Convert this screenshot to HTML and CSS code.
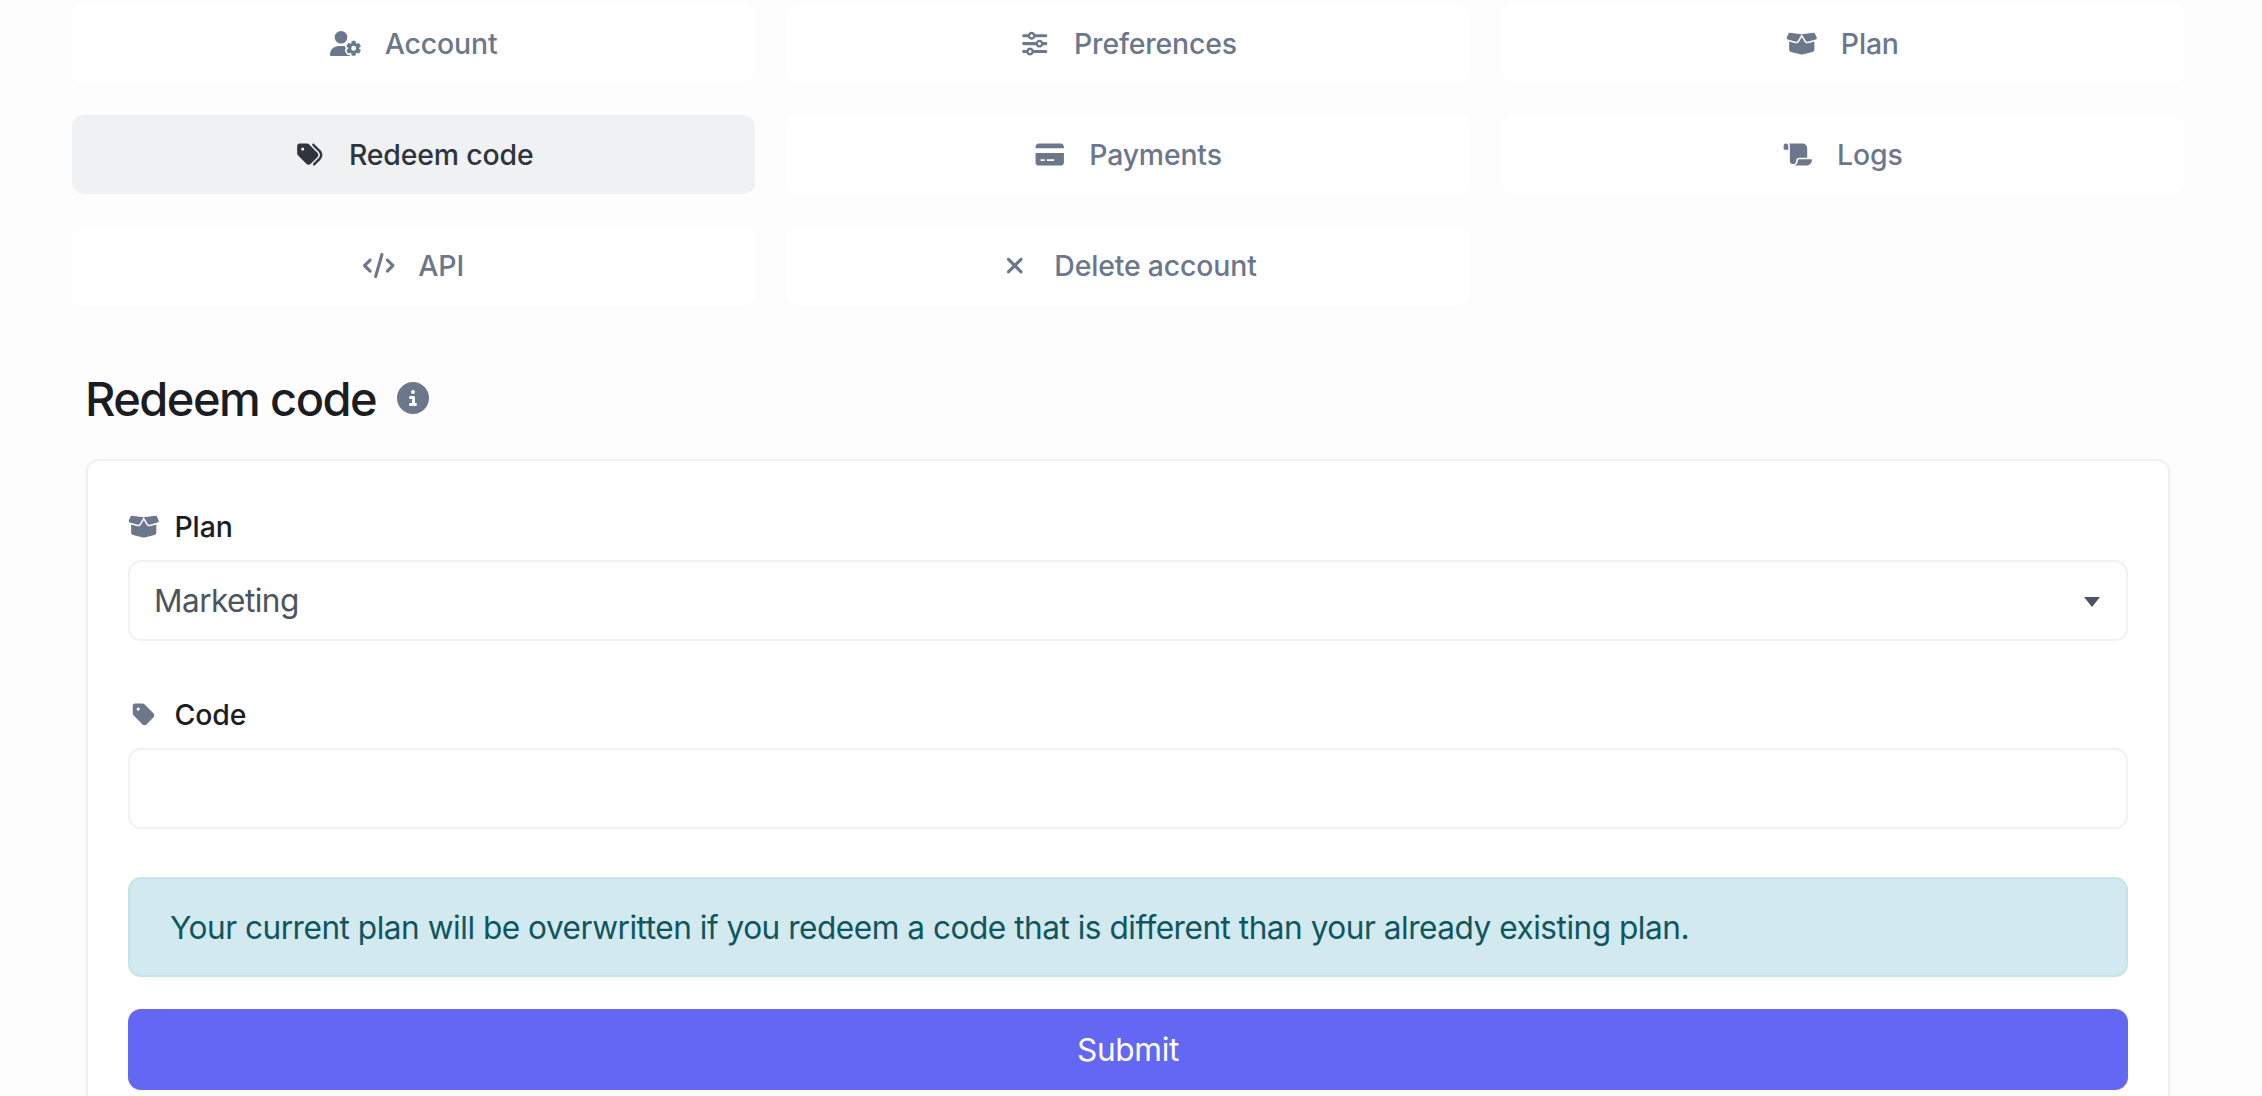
FILE: index.html
```
<!DOCTYPE html>
<html lang="en">
<head>
<meta charset="utf-8">
<title>Redeem code</title>
<link rel="stylesheet" href="styles.css">
</head>
<body>
<svg class="sprite" aria-hidden="true">
  <symbol id="box-open" viewBox="0 0 640 512"><path d="M58.9 42.1c3-6.1 9.6-9.6 16.3-8.7L320 64 564.8 33.4c6.7-.8 13.3 2.7 16.3 8.7l41.7 83.4c9 17.9-.6 39.6-19.8 45.1L439.6 217.3c-13.9 4-28.8-1.9-36.2-14.3L320 64 236.6 203c-7.4 12.4-22.3 18.3-36.2 14.3L37.1 170.6c-19.3-5.5-28.8-27.2-19.8-45.1L58.9 42.1zM321.1 128l54.9 91.4c14.9 24.8 44.6 36.6 72.5 28.6L576 211.6l0 167c0 22-15 41.2-36.4 46.6l-204.1 51c-10.2 2.6-20.9 2.6-31 0l-204.1-51C79 419.7 64 400.5 64 378.5l0-167L191.6 248c27.8 8 57.6-3.8 72.5-28.6L318.9 128l2.2 0z"/></symbol>
</svg>
<nav class="tabs">
  <a class="tab"><svg class="icon" viewBox="0 0 640 512"><path d="M224 0a128 128 0 1 1 0 256A128 128 0 1 1 224 0zM178.3 304l91.4 0c11.8 0 23.4 1.2 34.5 3.3c-2.1 18.5 7.4 35.6 21.8 44.8c-16.6 10.6-26.7 31.6-20 53.3c4 12.9 9.4 25.5 16.4 37.6s15.2 23.1 24.4 33c15.7 16.9 39.6 18.4 57.2 8.7l0 .9c0 9.2 2.7 18.5 7.9 26.3L29.7 512C13.3 512 0 498.7 0 482.3C0 383.8 79.8 304 178.3 304zM436 218.2c0-7 4.5-13.3 11.3-14.8c10.5-2.4 21.5-3.7 32.7-3.7s22.2 1.3 32.7 3.7c6.8 1.5 11.3 7.8 11.3 14.8l0 30.6c7.9 3.4 15.4 7.7 22.3 12.8l24.9-14.3c6.1-3.5 13.7-2.7 18.5 2.4c7.6 8.1 14.3 17.2 20.1 27.2s10.3 20.4 13.5 31c2.1 6.7-1.1 13.7-7.2 17.2l-25 14.4c.4 4 .7 8.1 .7 12.3s-.2 8.2-.7 12.3l25 14.4c6.1 3.5 9.2 10.5 7.2 17.2c-3.3 10.6-7.8 21-13.5 31s-12.5 19.1-20.1 27.2c-4.8 5.1-12.5 5.9-18.5 2.4l-24.9-14.3c-6.9 5.1-14.3 9.4-22.3 12.8l0 30.6c0 7-4.5 13.3-11.3 14.8c-10.5 2.4-21.5 3.7-32.7 3.7s-22.2-1.3-32.7-3.7c-6.8-1.5-11.3-7.8-11.3-14.8l0-30.5c-8-3.4-15.6-7.7-22.5-12.9l-24.7 14.3c-6.1 3.5-13.7 2.7-18.5-2.4c-7.6-8.1-14.3-17.2-20.1-27.2s-10.3-20.4-13.5-31c-2.1-6.7 1.1-13.7 7.2-17.2l24.8-14.3c-.4-4.1-.7-8.2-.7-12.4s.2-8.3 .7-12.4L343.8 325c-6.1-3.5-9.2-10.5-7.2-17.2c3.3-10.6 7.7-21 13.5-31s12.5-19.1 20.1-27.2c4.8-5.1 12.4-5.9 18.5-2.4l24.8 14.3c6.9-5.1 14.5-9.4 22.5-12.9l0-30.5zm92.1 133.5a48.1 48.1 0 1 0 -96.1 0 48.1 48.1 0 1 0 96.1 0z"/></svg><span>Account</span></a>
  <a class="tab"><svg class="icon" viewBox="0 0 512 512"><path d="M0 416c0 17.7 14.3 32 32 32l54.7 0c12.3 28.3 40.5 48 73.3 48s61-19.7 73.3-48L480 448c17.7 0 32-14.3 32-32s-14.3-32-32-32l-246.7 0c-12.3-28.3-40.5-48-73.3-48s-61 19.7-73.3 48L32 384c-17.7 0-32 14.3-32 32zm128 0a32 32 0 1 1 64 0 32 32 0 1 1 -64 0zM320 256a32 32 0 1 1 64 0 32 32 0 1 1 -64 0zm32-80c-32.8 0-61 19.7-73.3 48L32 224c-17.7 0-32 14.3-32 32s14.3 32 32 32l246.7 0c12.3 28.3 40.5 48 73.3 48s61-19.7 73.3-48l54.7 0c17.7 0 32-14.3 32-32s-14.3-32-32-32l-54.7 0c-12.3-28.3-40.5-48-73.3-48zM192 128a32 32 0 1 1 0-64 32 32 0 1 1 0 64zm73.3-64C253 35.7 224.8 16 192 16s-61 19.7-73.3 48L32 64C14.3 64 0 78.3 0 96s14.3 32 32 32l86.7 0c12.3 28.3 40.5 48 73.3 48s61-19.7 73.3-48L480 128c17.7 0 32-14.3 32-32s-14.3-32-32-32L265.3 64z"/></svg><span>Preferences</span></a>
  <a class="tab"><svg class="icon"><use href="#box-open"/></svg><span>Plan</span></a>
  <a class="tab active"><svg class="icon" viewBox="0 0 512 512"><path d="M345 39.1L472.8 168.4c52.4 53 52.4 138.2 0 191.2L360.8 472.9c-9.3 9.4-24.5 9.5-33.9 .2s-9.5-24.5-.2-33.9L438.6 325.9c33.9-34.3 33.9-89.4 0-123.7L310.9 72.9c-9.3-9.4-9.2-24.6 .2-33.9s24.6-9.2 33.9 .2zM0 229.5L0 80C0 53.5 21.5 32 48 32l149.5 0c17 0 33.3 6.7 45.3 18.7l168 168c25 25 25 65.5 0 90.5L277.3 442.7c-25 25-65.5 25-90.5 0l-168-168C6.7 262.7 0 246.5 0 229.5zM144 144a32 32 0 1 0 -64 0 32 32 0 1 0 64 0z"/></svg><span>Redeem code</span></a>
  <a class="tab"><svg class="icon" viewBox="0 0 576 512"><path d="M64 32C28.7 32 0 60.7 0 96l0 32 576 0 0-32c0-35.3-28.7-64-64-64L64 32zM576 224L0 224 0 416c0 35.3 28.7 64 64 64l448 0c35.3 0 64-28.7 64-64l0-192zM112 352l64 0c8.8 0 16 7.2 16 16s-7.2 16-16 16l-64 0c-8.8 0-16-7.2-16-16s7.2-16 16-16zm112 16c0-8.8 7.2-16 16-16l128 0c8.8 0 16 7.2 16 16s-7.2 16-16 16l-128 0c-8.8 0-16-7.2-16-16z"/></svg><span>Payments</span></a>
  <a class="tab"><svg class="icon" viewBox="0 0 576 512"><path d="M0 80l0 48c0 17.7 14.3 32 32 32l16 0 48 0 0-80c0-26.5-21.5-48-48-48S0 53.5 0 80zM112 32c10 13.4 16 30 16 48l0 304c0 35.3 28.7 64 64 64s64-28.7 64-64l0-5.3c0-32.4 26.3-58.7 58.7-58.7L480 320l0-192c0-53-43-96-96-96L112 32zM464 480c61.9 0 112-50.1 112-112c0-8.8-7.2-16-16-16l-245.3 0c-14.7 0-26.7 11.9-26.7 26.7l0 5.3c0 53-43 96-96 96l176 0 96 0z"/></svg><span>Logs</span></a>
  <a class="tab"><svg class="icon" viewBox="0 0 640 512"><path d="M392.8 1.2c-17-4.9-34.7 5-39.6 22l-128 448c-4.9 17 5 34.7 22 39.6s34.7-5 39.6-22l128-448c4.9-17-5-34.7-22-39.6zm80.6 120.1c-12.5 12.5-12.5 32.8 0 45.3L562.7 256l-89.4 89.4c-12.5 12.5-12.5 32.8 0 45.3s32.8 12.5 45.3 0l112-112c12.5-12.5 12.5-32.8 0-45.3l-112-112c-12.5-12.5-32.8-12.5-45.3 0zm-306.7 0c-12.5-12.5-32.8-12.5-45.3 0l-112 112c-12.5 12.5-12.5 32.8 0 45.3l112 112c12.5 12.5 32.8 12.5 45.3 0s12.5-32.8 0-45.3L77.3 256l89.4-89.4c12.5-12.5 12.5-32.8 0-45.3z"/></svg><span>API</span></a>
  <a class="tab"><svg class="icon" viewBox="0 0 384 512"><path d="M342.6 150.6c12.5-12.5 12.5-32.8 0-45.3s-32.8-12.5-45.3 0L192 210.7 86.6 105.4c-12.5-12.5-32.8-12.5-45.3 0s-12.5 32.8 0 45.3L146.7 256 41.4 361.4c-12.5 12.5-12.5 32.8 0 45.3s32.8 12.5 45.3 0L192 301.3 297.4 406.6c12.5 12.5 32.8 12.5 45.3 0s12.5-32.8 0-45.3L237.3 256 342.6 150.6z"/></svg><span>Delete account</span></a>
</nav>
<main class="content">
  <header class="heading">
    <h1>Redeem code</h1>
    <svg class="info" viewBox="0 0 512 512"><path d="M256 512A256 256 0 1 0 256 0a256 256 0 1 0 0 512zM216 336l24 0 0-64-24 0c-13.3 0-24-10.7-24-24s10.7-24 24-24l48 0c13.3 0 24 10.7 24 24l0 88 8 0c13.3 0 24 10.7 24 24s-10.7 24-24 24l-80 0c-13.3 0-24-10.7-24-24s10.7-24 24-24zm40-208a32 32 0 1 1 0 64 32 32 0 1 1 0-64z"/></svg>
  </header>
  <form class="card">
    <div class="field">
      <label class="label" for="plan"><svg class="icon"><use href="#box-open"/></svg><span>Plan</span></label>
      <div class="select">
        <select class="control" id="plan"><option>Marketing</option></select>
        <svg class="caret" viewBox="0 0 16 10"><path d="M0 0h16L8 10z"/></svg>
      </div>
    </div>
    <div class="field">
      <label class="label" for="code"><svg class="icon" viewBox="0 0 448 512"><path d="M0 80L0 229.5c0 17 6.7 33.3 18.7 45.3l176 176c25 25 65.5 25 90.5 0L418.7 317.3c25-25 25-65.5 0-90.5l-176-176c-12-12-28.3-18.7-45.3-18.7L48 32C21.5 32 0 53.5 0 80zm112 32a32 32 0 1 1 0 64 32 32 0 1 1 0-64z"/></svg><span>Code</span></label>
      <input class="control" id="code" type="text">
    </div>
    <div class="alert">Your current plan will be overwritten if you redeem a code that is different than your already existing plan.</div>
    <button class="submit" type="button">Submit</button>
  </form>
</main>
</body>
</html>
```
FILE: styles.css
```
* { box-sizing: border-box; }

body {
  margin: 0;
  height: 1096px;
  overflow: hidden;
  background: #fdfdfd;
  color: #1c1d22;
  font-family: Inter, "Liberation Sans", sans-serif;
}

.sprite { display: none; }

.tabs {
  display: grid;
  grid-template-columns: repeat(3, 1fr);
  grid-auto-rows: 79px;
  gap: 32px 31px;
  margin: 4px 78px 0 72px;
}

.tab {
  display: flex;
  align-items: center;
  justify-content: center;
  gap: 23.5px;
  border-radius: 12px;
  background: #fff;
  color: #6c778b;
  font-size: 28.4px;
  font-weight: 500;
  line-height: 40px;
  letter-spacing: -0.15px;
}

.tab.active {
  background: #f0f1f3;
  color: #2f353d;
}

.icon {
  flex: none;
  width: 31.5px;
  height: 25.2px;
  fill: currentColor;
}

.content { margin: 65px 92px 0 86px; }

.heading {
  display: flex;
  align-items: center;
  gap: 21px;
  height: 58px;
}

.heading h1 {
  margin: 0 0 0 -1px;
  font-size: 47px;
  font-weight: 540;
  line-height: 58px;
  letter-spacing: -1.55px;
}

.info {
  width: 32px;
  height: 32px;
  margin-top: -2px;
  fill: #6c778b;
}

/* Bottom edge of the card lies below the fold */
.card {
  height: 700px;
  margin-top: 31px;
  padding: 46px 40px;
  border: 2px solid #f1f1f3;
  border-radius: 13px;
  background: #fff;
}

.field { margin-bottom: 54px; }
.field + .field { margin-bottom: 48px; }

.label {
  display: flex;
  align-items: center;
  gap: 15px;
  height: 39px;
  margin-bottom: 14px;
  font-size: 28.4px;
  font-weight: 500;
  letter-spacing: -0.1px;
}

.label .icon { color: #6c778b; }

.select { position: relative; }

.control {
  display: block;
  width: 100%;
  height: 81px;
  margin: 0;
  padding: 1px 24px 0;
  appearance: none;
  border: 2px solid #f1f1f3;
  border-radius: 13px;
  background: #fff;
  color: #4d5461;
  font: 400 31.6px/40px Inter, "Liberation Sans", sans-serif;
  letter-spacing: -0.55px;
}

.caret {
  position: absolute;
  top: 37px;
  right: 28px;
  width: 16px;
  height: 10px;
  fill: #4d5461;
}

.alert {
  height: 100px;
  margin-bottom: 32px;
  padding: 29px 40px 0;
  border: 2px solid #c3e4e8;
  border-radius: 13px;
  background: #d2eaef;
  color: #11565f;
  font-size: 31.6px;
  line-height: 40px;
  letter-spacing: -0.49px;
  white-space: nowrap;
}

.submit {
  display: block;
  width: 100%;
  height: 81px;
  padding: 1px 0 0;
  border: 0;
  border-radius: 13px;
  background: #6466f4;
  color: #fff;
  font: 400 31.6px/40px Inter, "Liberation Sans", sans-serif;
  letter-spacing: -0.3px;
}
```
